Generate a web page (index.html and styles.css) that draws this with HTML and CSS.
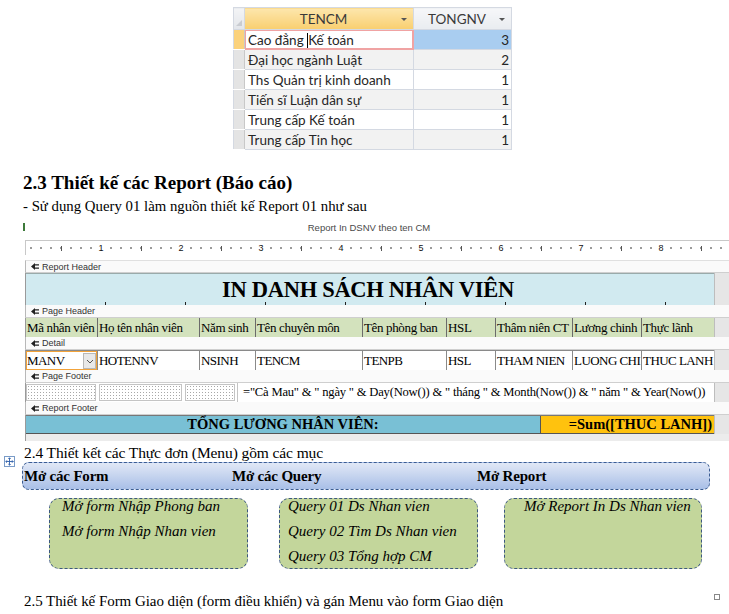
FILE: index.html
```html
<!DOCTYPE html>
<html lang="vi">
<head>
<meta charset="utf-8">
<title>Report</title>
<link rel="stylesheet" href="styles.css">
</head>
<body>
<div class="page">
  <div class="ds-wrap">
    <table class="ds">
      <colgroup><col class="w-sel"><col class="w-c1"><col class="w-c2"></colgroup>
      <thead>
        <tr>
          <th class="sel corner"><span class="tri"></span></th>
          <th class="c1 hot">TENCM<span class="dd"></span></th>
          <th class="c2">TONGNV<span class="dd"></span></th>
        </tr>
      </thead>
      <tbody>
        <tr class="cur"><td class="sel"></td><td class="c1 edit">Cao đẳng <span class="caret"></span>Kế toán</td><td class="c2 picked">3</td></tr>
        <tr class="alt"><td class="sel"></td><td class="c1">Đại học ngành Luật</td><td class="c2">2</td></tr>
        <tr><td class="sel"></td><td class="c1">Ths Quản trị kinh doanh</td><td class="c2">1</td></tr>
        <tr class="alt"><td class="sel"></td><td class="c1">Tiến sĩ Luận dân sự</td><td class="c2">1</td></tr>
        <tr><td class="sel"></td><td class="c1">Trung cấp Kế toán</td><td class="c2">1</td></tr>
        <tr class="alt"><td class="sel"></td><td class="c1">Trung cấp Tin học</td><td class="c2">1</td></tr>
      </tbody>
    </table>
  </div>

  <h2 class="h23">2.3 Thiết kế các Report (Báo cáo)</h2>
  <p class="p1">- Sử dụng Query 01 làm nguồn thiết kế Report 01 như sau</p>

  <div class="report">
    <div class="rtitle"><span class="gmark"></span><span class="rname">Report In DSNV theo ten CM</span></div>
    <div class="design">
      <div class="ruler">
        <span class="in"><b>1</b></span><span class="in"><b>2</b></span><span class="in"><b>3</b></span><span class="in"><b>4</b></span><span class="in"><b>5</b></span><span class="in"><b>6</b></span><span class="in"><b>7</b></span><span class="in"><b>8</b></span>
      </div>
      <div class="bar"><svg class="bi" viewBox="0 0 8 7" width="8" height="7"><path d="M0 3.5 L4 0 L4 1.2 L8 1.2 L8 2.6 L4 2.6 L4 4.4 L8 4.4 L8 5.8 L4 5.8 L4 7 Z" fill="#222"/></svg>Report Header</div>
      <div class="band">
        <div class="main rh"><span class="rh-text">IN DANH SÁCH NHÂN VIÊN</span></div>
        <div class="gutter"></div>
      </div>
      <div class="bar"><svg class="bi" viewBox="0 0 8 7" width="8" height="7"><path d="M0 3.5 L4 0 L4 1.2 L8 1.2 L8 2.6 L4 2.6 L4 4.4 L8 4.4 L8 5.8 L4 5.8 L4 7 Z" fill="#222"/></svg>Page Header</div>
      <div class="band">
        <div class="main ph">
          <span class="f f1">Mã nhân viên</span><span class="f f2">Họ tên nhân viên</span><span class="f f3">Năm sinh</span><span class="f f4">Tên chuyên môn</span><span class="f f5">Tên phòng ban</span><span class="f f6">HSL</span><span class="f f7">Thâm niên CT</span><span class="f f8">Lương chinh</span><span class="f f9">Thực lãnh</span>
        </div>
        <div class="gutter"></div>
      </div>
      <div class="bar"><svg class="bi" viewBox="0 0 8 7" width="8" height="7"><path d="M0 3.5 L4 0 L4 1.2 L8 1.2 L8 2.6 L4 2.6 L4 4.4 L8 4.4 L8 5.8 L4 5.8 L4 7 Z" fill="#222"/></svg>Detail</div>
      <div class="band">
        <div class="main dt">
          <span class="f f1 sel-field">MANV<span class="combo"><svg viewBox="0 0 8 5" width="8" height="5"><path d="M1 1 L4 4 L7 1" fill="none" stroke="#555" stroke-width="1"/></svg></span></span><span class="f f2">HOTENNV</span><span class="f f3">NSINH</span><span class="f f4">TENCM</span><span class="f f5">TENPB</span><span class="f f6">HSL</span><span class="f f7">THAM NIEN</span><span class="f f8">LUONG CHI</span><span class="f f9">THUC LANH</span>
        </div>
        <div class="gutter"></div>
      </div>
      <div class="bar"><svg class="bi" viewBox="0 0 8 7" width="8" height="7"><path d="M0 3.5 L4 0 L4 1.2 L8 1.2 L8 2.6 L4 2.6 L4 4.4 L8 4.4 L8 5.8 L4 5.8 L4 7 Z" fill="#222"/></svg>Page Footer</div>
      <div class="band">
        <div class="main pf">
          <span class="dots d1"></span><span class="dots d2"></span><span class="dots d3"></span>
          <span class="formula">="Cà Mau" &amp; " ngày " &amp; Day(Now()) &amp; " tháng " &amp; Month(Now()) &amp; " năm " &amp; Year(Now())</span>
        </div>
        <div class="gutter"></div>
      </div>
      <div class="bar"><svg class="bi" viewBox="0 0 8 7" width="8" height="7"><path d="M0 3.5 L4 0 L4 1.2 L8 1.2 L8 2.6 L4 2.6 L4 4.4 L8 4.4 L8 5.8 L4 5.8 L4 7 Z" fill="#222"/></svg>Report Footer</div>
      <div class="band">
        <div class="main rf">
          <span class="rf-label">TỔNG LƯƠNG NHÂN VIÊN:</span><span class="rf-sum">=Sum([THUC LANH])</span>
        </div>
        <div class="gutter"></div>
      </div>
      <div class="rbottom"></div>
    </div>
  </div>

  <p class="p24">2.4 Thiết kết các Thực đơn (Menu) gồm các mục</p>
  <div class="menu-wrap">
    <span class="move"><svg viewBox="0 0 11 11" width="11" height="11"><rect x="0.5" y="0.5" width="10" height="10" fill="#fff" stroke="#7a9cc8"/><path d="M5.5 1.8 V9.2 M1.8 5.5 H9.2 M4.3 3 L5.5 1.8 L6.7 3 M4.3 8 L5.5 9.2 L6.7 8 M3 4.3 L1.8 5.5 L3 6.7 M8 4.3 L9.2 5.5 L8 6.7" fill="none" stroke="#2d5ea8" stroke-width="0.9"/></svg></span>
    <div class="menubar">
      <span class="mi mi1">Mở các Form</span><span class="mi mi2">Mở các Query</span><span class="mi mi3">Mở Report</span>
    </div>
    <div class="boxes">
      <div class="box b1"><p>Mở form Nhập Phong ban</p><p>Mở form Nhập Nhan vien</p></div>
      <div class="box b2"><p>Query 01 Ds Nhan vien</p><p>Query 02 Tìm Ds Nhan vien</p><p>Query 03 Tổng hợp CM</p></div>
      <div class="box b3"><p>Mở Report In Ds Nhan vien</p></div>
    </div>
  </div>

  <div class="p25row"><span class="p25">2.5 Thiết kế Form Giao diện (form điều khiển) và gán Menu vào form Giao diện</span><span class="pmark"></span></div>
</div>
</body>
</html>
```

FILE: styles.css
```css
* { box-sizing: border-box; }
html, body { margin: 0; padding: 0; background: #fff; }
body { font-family: "Liberation Serif", "Times New Roman", serif; color: #000; }
.page { width: 729px; height: 614px; overflow: hidden; }

/* ---------- datasheet ---------- */
.ds-wrap { padding: 7px 0 0 233px; }
.ds {
  border-collapse: collapse;
  table-layout: fixed;
  width: 278px;
  font-family: Lato, "Noto Sans", sans-serif;
  font-size: 13.5px;
  color: #262626;
}
.w-sel { width: 11px; }
.w-c1 { width: 169px; }
.w-c2 { width: 98px; }
.ds th, .ds td {
  height: 20px;
  padding: 0 3px;
  border: 1px solid #d4d9e2;
  white-space: nowrap;
  overflow: hidden;
}
.ds th {
  height: 22px;
  font-weight: normal;
  position: relative;
  color: #3a3a3a;
  background: linear-gradient(#f6f7f9, #e9ecf0);
  text-align: center;
  padding-right: 14px;
}
.ds th.hot { background: linear-gradient(#fde6ad, #f9cf6f); }
.ds th.corner { background: linear-gradient(#f3f4f6, #e3e6ea); padding: 0; }
.tri {
  position: absolute; left: 2px; bottom: 3px;
  width: 0; height: 0;
  border-left: 6px solid transparent;
  border-bottom: 6px solid #c9ccd1;
}
.dd {
  position: absolute; right: 6px; top: 10px;
  width: 0; height: 0;
  border-left: 3.5px solid transparent;
  border-right: 3.5px solid transparent;
  border-top: 3.5px solid #555;
}
.ds td.sel { background: #e4e4e4; border-color: #fff #c8c8c8 #fff #d4d9e2; padding: 0; }
.ds tr.cur td.sel { background: #fbd27c; }
.ds td.c1 { text-align: left; padding-left: 3px; }
.ds td.c2 { text-align: right; padding-right: 2px; }
.ds tr.alt td.c1, .ds tr.alt td.c2 { background: #f2f2f2; }
.ds td.edit { box-shadow: inset 0 0 0 1px #f0a3a3; border-color: #f0a3a3; background: #fff; }
.ds td.picked { background: #a9cdf0; }
.caret { display: inline-block; width: 1px; height: 15px; background: #000; vertical-align: -3px; }

/* ---------- headings ---------- */
.h23 {
  margin: 22px 0 0 23px;
  font-size: 19px;
  line-height: 22px;
  font-weight: bold;
}
.p1 {
  margin: 3px 0 0 23px;
  font-size: 14.8px;
  line-height: 18px;
}

/* ---------- report design ---------- */
.report { margin: 2px 0 0 22px; }
.rtitle {
  height: 20px;
  display: flex;
  align-items: center;
}
.gmark { width: 2px; height: 8px; background: #3d7a3a; margin-left: 1px; }
.rname {
  flex: 1;
  text-align: center;
  padding-right: 16px;
  font-family: "Liberation Sans", Arial, sans-serif;
  font-size: 9.5px;
  color: #4a4a4a;
}
.design {
  margin-left: 3px;
  width: 704px;
}
.ruler {
  margin-top: 3px;
  height: 15px;
  display: flex;
  border-top: 1px solid #c8c8c8;
  border-left: 1px solid #c8c8c8;
  background:
    repeating-linear-gradient(90deg, transparent 0 35px, #555 35px 36px, transparent 36px 80px) 0 50% / 100% 5px no-repeat,
    radial-gradient(circle at 5px 50%, #777 0.6px, transparent 1px) 0 0 / 10px 100% repeat-x;
  font-family: "Liberation Sans", Arial, sans-serif;
  font-size: 9px;
  color: #111;
}
.in { width: 80px; flex: none; display: flex; justify-content: flex-end; align-items: center; }
.in b { font-weight: normal; width: 10px; text-align: center; background: #fff; line-height: 10px; }

.bar {
  margin-top: 0;
  height: 13px;
  display: flex;
  align-items: center;
  gap: 3px;
  padding-left: 5px;
  font-family: "Liberation Sans", Arial, sans-serif;
  font-size: 9px;
  color: #333;
  background: #fafafa;
  border-left: 1px solid #b8b8b8;
  border-bottom: 1px solid #cfcfcf;
}
.ruler + .bar { margin-top: 5px; border-top: 1px solid #e0e0e0; }
.bi { flex: none; }
.band { display: flex; border-left: 1px solid #9a9a9a; }
.main { width: 688px; flex: none; display: flex; }
.gutter { flex: 1; background: #e6e6e6; border-left: 1px solid #bdbdbd; }

.rh {
  height: 32px;
  background: #d1eaf0;
  justify-content: center;
  align-items: center;
  position: relative;
  border-top: 1px solid #9aa;
}
.rh::after {
  content: "";
  position: absolute; left: 0; right: 0; bottom: 0; height: 3px;
  background: repeating-linear-gradient(90deg, transparent 0 79px, #222 79px 80px);
}
.rh-text {
  font-weight: bold;
  font-size: 22.5px;
  letter-spacing: -0.3px;
  padding-right: 4px;
}

.f {
  flex: none;
  height: 100%;
  display: flex;
  align-items: center;
  padding-left: 1px;
  font-size: 13px;
  white-space: nowrap;
  overflow: hidden;
}
.f1 { width: 71px; }
.f2 { width: 102px; }
.f3 { width: 56px; }
.f4 { width: 107px; }
.f5 { width: 84px; }
.f6 { width: 49px; }
.f7 { width: 77px; }
.f8 { width: 69px; }
.f9 { width: 73px; }

.ph { height: 19px; background: #d3e2bd; letter-spacing: -0.35px; }
.ph .f { border-left: 1px solid #6b6b6b; }
.ph .f1 { border-left: none; }

.dt { height: 20px; background: #fff; border-top: 1px solid #8a8a8a; letter-spacing: -0.55px; }
.dt .f { border-left: 1px solid #8a8a8a; }
.dt .f1 { border-left: none; }
.sel-field {
  position: relative;
  border: 1px solid #f2a33a !important;
  padding-left: 0;
}
.combo {
  position: absolute; right: 0; top: 1px;
  width: 13px; height: 16px;
  background: #e8e8e8;
  border: 1px solid #b8b8b8;
  display: flex; align-items: center; justify-content: center;
}

.pf { height: 19px; align-items: center; gap: 0; }
.dots {
  flex: none;
  height: 17px;
  border: 1px solid #c4c4c4;
  background: radial-gradient(circle, #a8a8a8 0.5px, transparent 0.8px) 0 0 / 3px 3px;
}
.d1 { width: 70px; }
.d2 { width: 83px; margin-left: 3px; }
.d3 { width: 50px; margin-left: 3px; }
.formula {
  flex: 1;
  height: 19px;
  display: flex;
  align-items: center;
  padding-left: 5px;
  font-size: 12.6px;
  letter-spacing: -0.2px;
  white-space: nowrap;
  overflow: hidden;
  border-left: 1px solid #c4c4c4;
  margin-left: 2px;
}

.rf { height: 19px; font-weight: bold; font-size: 14.5px; border-top: 1px solid #777; border-bottom: 1px solid #555; }
.rf-label {
  width: 514px; flex: none;
  background: #79c0d5;
  display: flex; align-items: center; justify-content: center;
  padding-left: 0;
}
.rf-sum {
  flex: 1;
  background: #ffc20e;
  display: flex; align-items: center; justify-content: flex-end;
  padding-right: 2px;
  border-left: 1px solid #555;
}
.rbottom { height: 7px; background: #ececec; border-left: 1px solid #9a9a9a; }

/* ---------- menu ---------- */
.p24 {
  margin: 3px 0 0 24px;
  font-size: 15.5px;
  line-height: 17px;
  letter-spacing: -0.1px;
}
.menu-wrap { position: relative; padding-top: 1px; }
.move { position: absolute; left: 4px; top: -5px; width: 11px; height: 11px; }
.move svg { display: block; }
.menubar {
  margin-left: 22px;
  width: 688px;
  height: 28px;
  border: 1px dashed #3b5c92;
  border-radius: 7px;
  background: linear-gradient(#e1e8f6, #a9bfe7);
  display: flex;
  align-items: center;
  font-weight: bold;
  font-size: 15px;
  letter-spacing: -0.2px;
}
.mi { flex: none; }
.mi1 { width: 209px; padding-left: 1px; }
.mi2 { width: 245px; }

.boxes {
  display: flex;
  margin-top: 8px;
  padding-left: 49px;
}
.box {
  flex: none;
  width: 199px;
  height: 71px;
  border: 1px dashed #3d5880;
  border-radius: 10px;
  background: #c3d69b;
  font-style: italic;
  font-size: 15px;
  padding-top: 0;
}
.box p { margin: 0 0 10px; line-height: 15px; white-space: nowrap; }
.b1 { padding-left: 12px; }
.b2 { margin-left: 31px; padding-left: 8px; }
.b3 { margin-left: 26px; padding-left: 19px; width: 198px; }

.p25row {
  margin-top: 23px;
  display: flex;
  align-items: center;
  justify-content: space-between;
  padding: 0 9px 0 24px;
}
.p25 { font-size: 15px; line-height: 18px; letter-spacing: -0.05px; }
.pmark { width: 6px; height: 6px; border: 1px solid #888; margin-top: -8px; }
```
